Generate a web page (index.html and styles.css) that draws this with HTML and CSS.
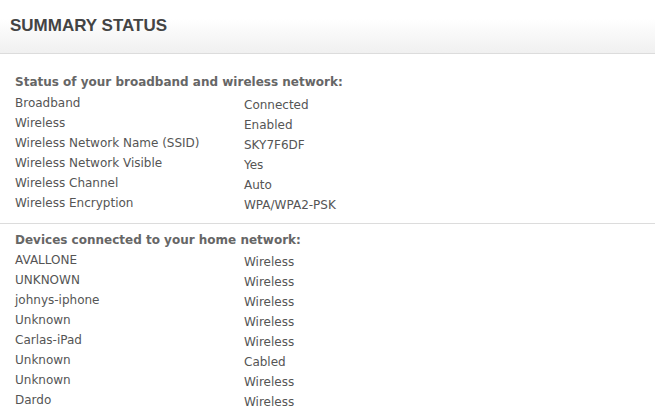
FILE: index.html
```html
<!DOCTYPE html>
<html lang="en">
<head>
    <meta charset="UTF-8">
    <title>Summary Status</title>
    <link rel="stylesheet" href="styles.css">
</head>
<body>
    <div class="page-header">
        <h1>SUMMARY STATUS</h1>
    </div>

    <div class="section">
        <h2>Status of your broadband and wireless network:</h2>
        <div class="status-grid">
            <div class="label">Broadband</div><div class="value">Connected</div>
            <div class="label">Wireless</div><div class="value">Enabled</div>
            <div class="label">Wireless Network Name (SSID)</div><div class="value">SKY7F6DF</div>
            <div class="label">Wireless Network Visible</div><div class="value">Yes</div>
            <div class="label">Wireless Channel</div><div class="value">Auto</div>
            <div class="label">Wireless Encryption</div><div class="value">WPA/WPA2-PSK</div>
        </div>
    </div>

    <div class="section devices">
        <h2>Devices connected to your home network:</h2>
        <div class="status-grid">
            <div class="label">AVALLONE</div><div class="value">Wireless</div>
            <div class="label">UNKNOWN</div><div class="value">Wireless</div>
            <div class="label">johnys-iphone</div><div class="value">Wireless</div>
            <div class="label">Unknown</div><div class="value">Wireless</div>
            <div class="label">Carlas-iPad</div><div class="value">Wireless</div>
            <div class="label">Unknown</div><div class="value">Cabled</div>
            <div class="label">Unknown</div><div class="value">Wireless</div>
            <div class="label">Dardo</div><div class="value">Wireless</div>
        </div>
    </div>
</body>
</html>
```

FILE: styles.css
```css
body {
    margin: 0;
    background: #fff;
    color: #555;
    font-family: "DejaVu Sans", Verdana, sans-serif;
    font-size: 12px;
    overflow: hidden;
}
.page-header {
    height: 53px;
    border-bottom: 1px solid #dcdcdc;
    background: linear-gradient(to bottom, #ffffff 0%, #ffffff 35%, #f0f0f0 100%);
    display: flex;
    align-items: center;
    padding: 0 10px;
}
.page-header h1 {
    margin: 0;
    padding-bottom: 2px;
    font-family: "Liberation Sans", Arial, sans-serif;
    font-size: 17px;
    font-weight: bold;
    color: #444;
}
.section {
    padding: 18px 15px 10px;
    border-bottom: 1px solid #dcdcdc;
}
.section h2 {
    margin: 0 0 1px;
    font-size: 12px;
    line-height: 20px;
    font-weight: bold;
    color: #666;
}
.section.devices {
    padding-top: 6px;
    border-bottom: none;
}
.section.devices h2 {
    margin-bottom: 0;
}
.status-grid {
    display: grid;
    grid-template-columns: 229px 1fr;
}
.label, .value {
    line-height: 20px;
    height: 20px;
}
.value {
    padding-top: 2px;
    height: 18px;
}
```
